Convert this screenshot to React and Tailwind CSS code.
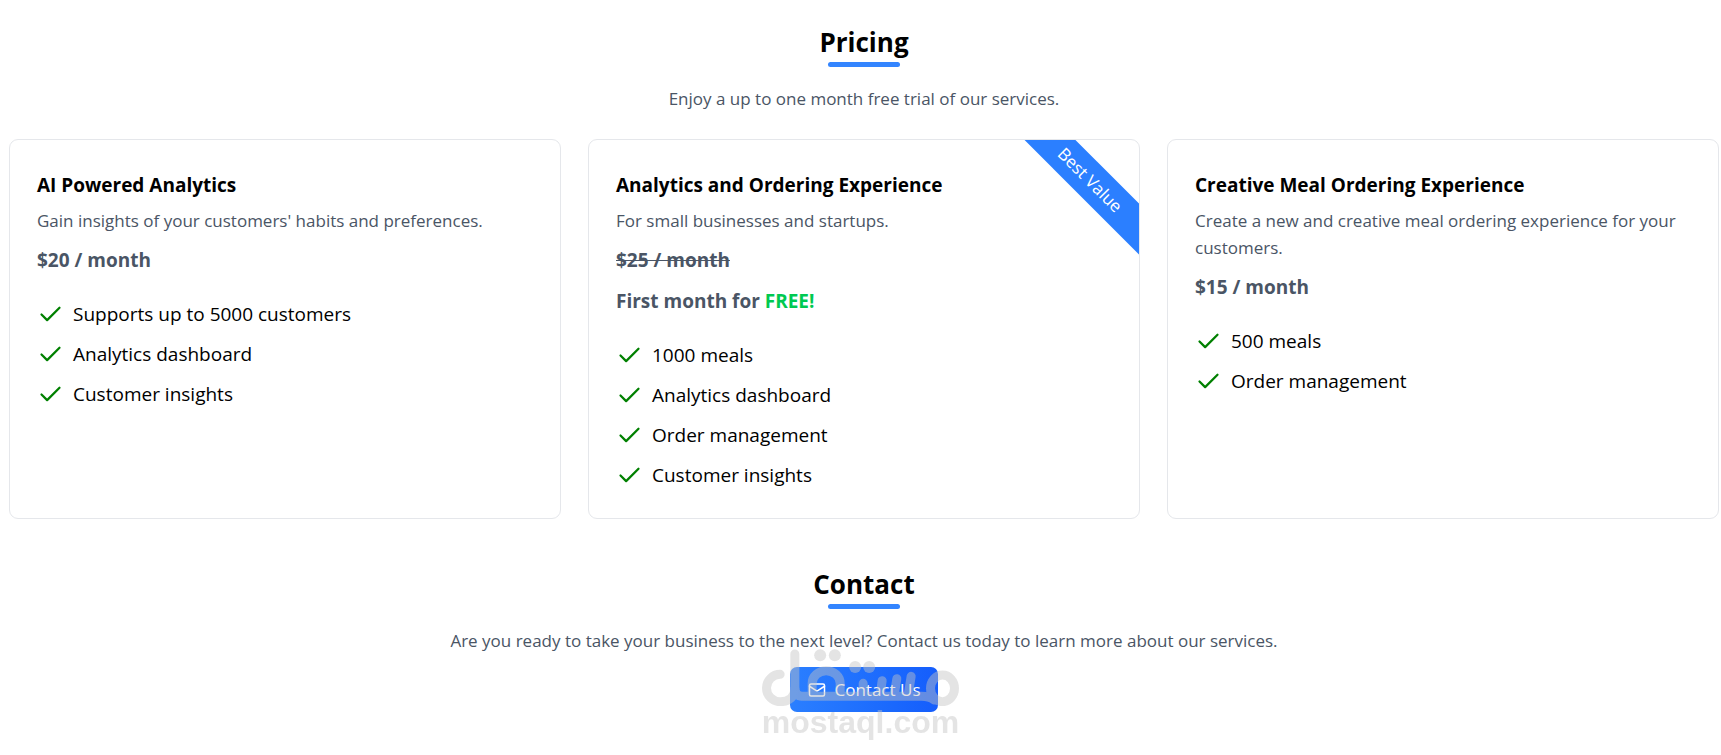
import { Check, Mail } from "lucide-react";

const plans = [
  {
    title: "AI Powered Analytics",
    description: "Gain insights of your customers' habits and preferences.",
    price: "$20 / month",
    features: ["Supports up to 5000 customers", "Analytics dashboard", "Customer insights"],
  },
  {
    title: "Analytics and Ordering Experience",
    description: "For small businesses and startups.",
    price: "$25 / month",
    firstMonthFree: true,
    badge: "Best Value",
    features: ["1000 meals", "Analytics dashboard", "Order management", "Customer insights"],
  },
  {
    title: "Creative Meal Ordering Experience",
    description: "Create a new and creative meal ordering experience for your customers.",
    price: "$15 / month",
    features: ["500 meals", "Order management"],
  },
];

function SectionHeading({ title, children }) {
  return (
    <div className="flex flex-col items-center text-center">
      <h2 className="text-[26px] leading-9 font-bold">{title}</h2>
      <div className="mt-0.5 h-[5px] w-18 rounded-full bg-[#3385ff]" />
      <p className="mt-[18px] text-[17px] leading-7 text-gray-600">{children}</p>
    </div>
  );
}

function PlanCard({ plan }) {
  return (
    <article className="relative overflow-hidden rounded-[9px] border border-gray-200 p-[27px]">
      {plan.badge && (
        <span className="absolute top-[22px] -right-[47px] w-48 rotate-45 bg-[#2b7fff] text-center text-[17px] leading-9 text-white">
          {plan.badge}
        </span>
      )}
      <h3 className="text-[19px] leading-9 font-bold">{plan.title}</h3>
      <p className="mt-1 text-[17px] leading-[27px] text-gray-600">{plan.description}</p>
      <div className="mt-1.5 text-[19px] leading-[41px] font-bold text-gray-600">
        <p>{plan.firstMonthFree ? <s className="decoration-1">{plan.price}</s> : plan.price}</p>
        {plan.firstMonthFree && (
          <p>
            First month for <span className="text-[#00c951]">FREE!</span>
          </p>
        )}
      </div>
      <ul className="mt-[17px] flex flex-col gap-2">
        {plan.features.map((feature) => (
          <li key={feature} className="flex items-center gap-[9px] text-[19px] leading-8">
            <Check className="size-[27px] shrink-0 text-[#008000]" aria-hidden="true" />
            {feature}
          </li>
        ))}
      </ul>
    </article>
  );
}

function Watermark() {
  return (
    <div className="pointer-events-none fixed inset-x-0 bottom-[17px] flex flex-col items-center text-[#c4c4c4] opacity-45">
      <svg
        viewBox="22 27 590 171"
        className="h-[57px] w-[197px]"
        fill="none"
        stroke="currentColor"
        strokeWidth="27"
        strokeLinecap="round"
        aria-hidden="true"
      >
        <path d="M76 103A41 41 0 1 0 76 185C104 185 120 168 120 146V42" />
        <path d="M120 146Q122 169 142 169H500Q524 169 538 180" />
        <path d="M172 165V130A42 38 0 0 1 256 130V165" />
        <path d="M325 130V165M382 122L376 165M426 116L418 165M469 109L460 165" />
        <ellipse cx="563" cy="145" rx="36" ry="40" />
        <g fill="currentColor" stroke="none">
          <circle cx="196" cy="46" r="18" />
          <circle cx="240" cy="46" r="18" />
          <circle cx="301" cy="81" r="18" />
          <circle cx="343" cy="81" r="18" />
        </g>
      </svg>
      <span className="font-['Liberation_Sans',sans-serif] text-[32px] leading-8 font-bold">
        mostaql.com
      </span>
    </div>
  );
}

export default function App() {
  return (
    <main className="bg-white pt-6 pr-0.5 pb-10 pl-[9px] font-['Open_Sans',sans-serif] text-black">
      <section>
        <SectionHeading title="Pricing">
          Enjoy a up to one month free trial of our services.
        </SectionHeading>
        <div className="mt-[26px] grid grid-cols-1 gap-[27px] md:grid-cols-3">
          {plans.map((plan) => (
            <PlanCard key={plan.title} plan={plan} />
          ))}
        </div>
      </section>

      <section className="mt-[47px] flex flex-col items-center">
        <SectionHeading title="Contact">
          Are you ready to take your business to the next level? Contact us today to learn more
          about our services.
        </SectionHeading>
        <button
          type="button"
          className="mt-3 flex h-[45px] items-center gap-[9px] rounded-[7px] bg-linear-to-r from-[#2b7fff] to-[#155dfc] px-[18px] text-[17px] text-white"
        >
          <Mail className="size-[18px]" aria-hidden="true" />
          Contact Us
        </button>
      </section>

      <Watermark />
    </main>
  );
}
